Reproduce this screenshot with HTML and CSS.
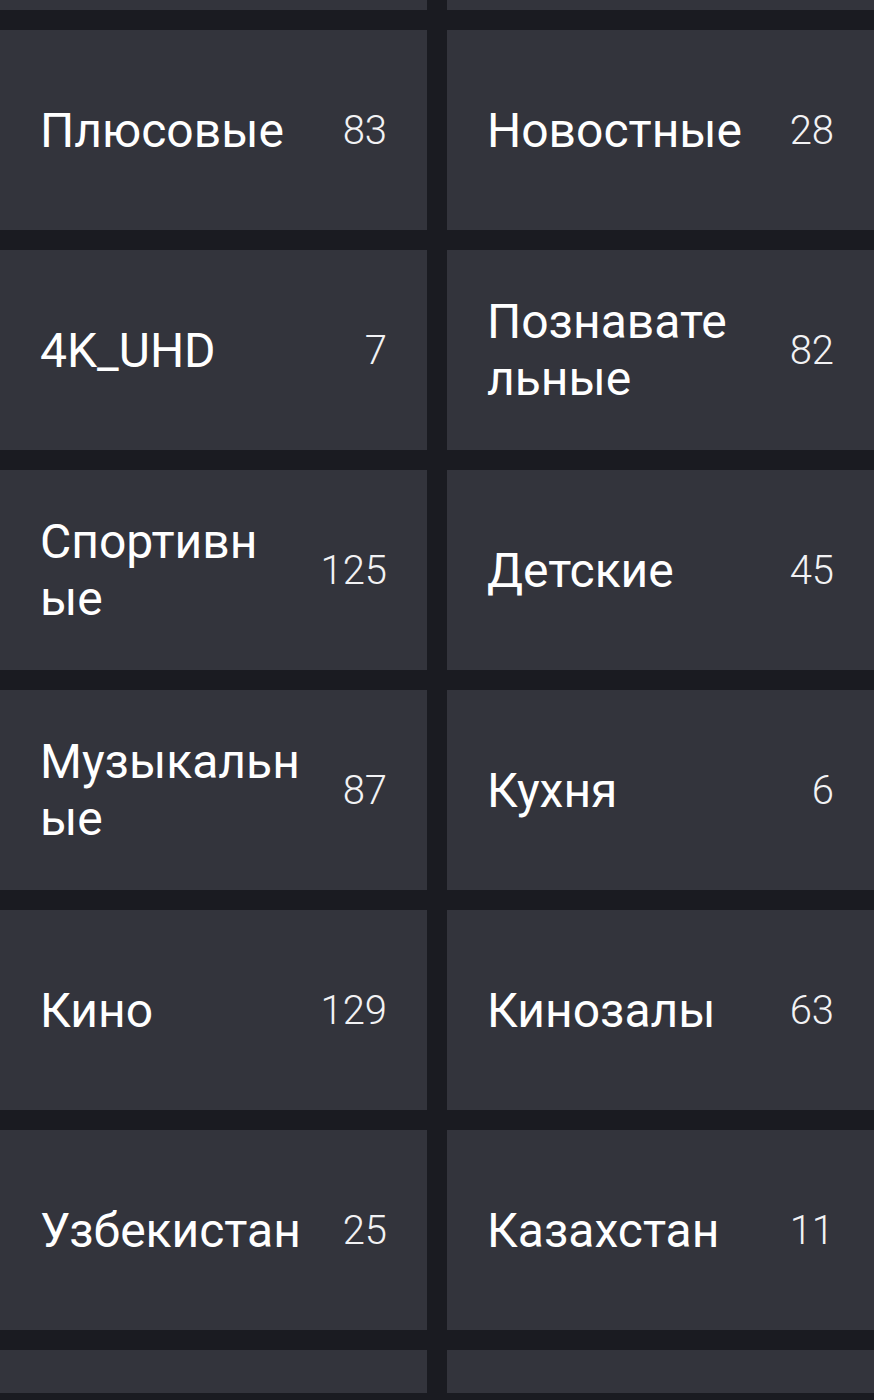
FILE: index.html
```html
<!DOCTYPE html>
<html>

<head>
  <meta charset="UTF-8">
  <title>Категории</title>
  <link rel="stylesheet" href="styles.css">
</head>

<body>

  <div class="grid">
    <div class="card"></div>
    <div class="card"></div>

    <div class="card"><span class="name">Плюсовые</span><span class="count">83</span></div>
    <div class="card"><span class="name">Новостные</span><span class="count">28</span></div>

    <div class="card"><span class="name">4K_UHD</span><span class="count">7</span></div>
    <div class="card"><span class="name">Познавате<wbr>льные</span><span class="count">82</span></div>

    <div class="card"><span class="name">Спортивн<wbr>ые</span><span class="count">125</span></div>
    <div class="card"><span class="name">Детские</span><span class="count">45</span></div>

    <div class="card"><span class="name">Музыкальн<wbr>ые</span><span class="count">87</span></div>
    <div class="card"><span class="name">Кухня</span><span class="count">6</span></div>

    <div class="card"><span class="name">Кино</span><span class="count">129</span></div>
    <div class="card"><span class="name">Кинозалы</span><span class="count">63</span></div>

    <div class="card"><span class="name">Узбекистан</span><span class="count">25</span></div>
    <div class="card"><span class="name">Казахстан</span><span class="count">11</span></div>

    <div class="card"></div>
    <div class="card"></div>
  </div>

</body>

</html>
```

FILE: styles.css
```css
:root {
  --bg-dark: #1a1b21;
  --bg-card: #33343c;
}

body {
  background-color: var(--bg-dark);
  color: #fff;
  margin: 0;
  font-family: 'Roboto', 'Noto Sans', sans-serif;
  overflow: hidden;
}

/* first and last rows are cut by the edge of the screen */
.grid {
  display: grid;
  grid-template-columns: 1fr 1fr;
  grid-template-rows: 10px repeat(6, 200px) 43px;
  gap: 20px;
}

.card {
  background-color: var(--bg-card);
  display: flex;
  align-items: center;
  gap: 40px;
  padding: 0 40px;
}

.name {
  flex: 1;
  font-size: 48px;
  line-height: 57px;
}

.count {
  font-size: 40px;
  font-weight: 300;
  color: #f2f2f4;
}
```
